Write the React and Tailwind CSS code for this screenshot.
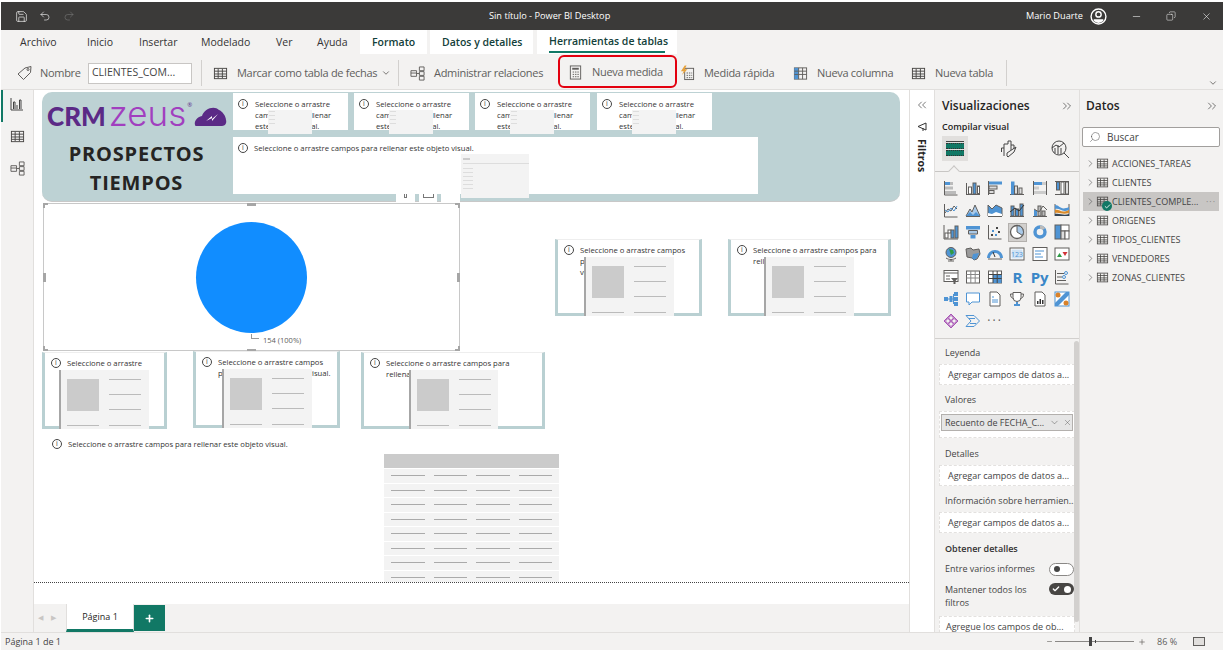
import React from 'react';
import { ChevronDown, ChevronRight, ChevronsLeft, ChevronsRight, Check, Minus, Plus, Search, Undo2, Redo2, X, Save, Copy } from 'lucide-react';

const G = '#605e5c';
const B = '#4f94d4';
const LB = '#a9c9e8';

const Ic = ({ children, size = 16, vb = 16, className = '' }) => (
  <svg width={size} height={size} viewBox={`0 0 ${vb} ${vb}`} fill="none" strokeWidth="1" className={className}>
    {children}
  </svg>
);

const P = ({ d, c = G, f = 'none' }) => <path d={d} stroke={c} fill={f} />;
const R = ({ x, y, w, h, f = B, s = 'none' }) => <rect x={x} y={y} width={w} height={h} fill={f} stroke={s} />;

// icons of the visual gallery, row by row
const vizIcons = [
  <><P d="M1.5 1v14h13" /><R x={2} y={2} w={5} h={3} /><R x={7} y={2} w={3} h={3} f="#bbb" /><R x={2} y={6.5} w={8} h={3} f="#bbb" /><R x={2} y={11} w={11} h={3} f="#bbb" /></>,
  <><P d="M1 14.5h14M1.5 3v12" /><R x={3.5} y={7} w={3} h={7} s={G} f="#fff" /><R x={8} y={3} w={3} h={11} s={G} /><R x={12.5} y={6} w={2} h={8} s={G} f="#fff" /></>,
  <><P d="M1.5 1v14" /><R x={2} y={1.5} w={13} h={3} /><R x={2} y={6} w={8} h={3} f="#ddd" s={G} /><R x={2} y={10.5} w={5} h={3} f="#ddd" s={G} /></>,
  <><P d="M1 14.5h14" /><R x={2} y={1.5} w={3.5} h={13} /><R x={5.5} y={6} w={3} h={8} f="#ddd" s={G} /><R x={10} y={8} w={3} h={6} f="#ddd" s={G} /></>,
  <><P d="M1.5 1v14M14.5 1v14" /><R x={2} y={2} w={8} h={3} /><R x={10} y={2} w={4} h={3} f="#ccc" /><R x={2} y={6.5} w={5} h={3} f="#ccc" /><R x={2} y={11} w={12} h={3} f="#ccc" /></>,
  <><P d="M1 14.5h14M1 1.5h14" /><R x={2.5} y={2} w={3} h={8} s={G} /><R x={7} y={2} w={3} h={12} s={G} f="#fff" /><R x={11.5} y={2} w={3} h={12} s={G} f="#ddd" /></>,
  <><P d="M1.5 2v13h13" /><P d="M2 11l3-4 3 2 3-5 3 3" /><P d="M2 8l3 2 3-4 3 3 3-5" c={B} /></>,
  <><P d="M1 14.5h14" /><path d="M1 14l4-7 2 3 3-7 5 11z" fill={LB} stroke={G} /><path d="M1 14l4-4 3 3 3-3 4 4z" fill={B} /></>,
  <><P d="M1 14.5h14" /><path d="M1 3l4 4 4-4 6 3v8H1z" fill={B} stroke={G} /><path d="M1 11l4 1 4-2 6 2v2H1z" fill="#fff" /></>,
  <><P d="M1 14.5h14" /><R x={2} y={4} w={3} h={10} s={G} /><R x={6.5} y={7} w={3} h={7} s={G} /><R x={11} y={2} w={3} h={12} s={G} /><P d="M1 10l5-4 4 3 5-6" c="#333" /></>,
  <><P d="M1 14.5h14" /><R x={2} y={8} w={3} h={6} /><R x={6} y={4} w={3} h={10} f="#bbb" s={G} /><R x={10} y={9} w={3} h={5} f="#bbb" s={G} /><P d="M2 7l5 3 4-6 4 4" /></>,
  <><P d="M1 2v12M15 2v12" /><path d="M1 3c5 0 5 6 14 2v3c-8 3-8-2-14-1z" fill={B} /><path d="M1 8c5-1 6 4 14 0v3c-7 2-9-1-14 0z" fill="#d98a2b" /><path d="M1 12c5-1 8 2 14 0v2H1z" fill="#345" /></>,
  <><P d="M1 1v14h14" /><R x={2} y={9} w={3} h={5} f="#fff" s={G} /><R x={5} y={6} w={3} h={3} s={G} f="#fff" /><R x={8} y={6} w={3} h={8} s={G} /><R x={12} y={2} w={3} h={12} s={G} /></>,
  <><path d="M1 2h14v3.5H1z" fill={B} /><path d="M3.5 6.5h9V10h-9z" fill={LB} stroke={G} /><path d="M5.5 11h5v3.5h-5z" fill={B} /></>,
  <><P d="M1.5 1v14h13" /><R x={9} y={3} w={2} h={2} f="#444" /><R x={5} y={6} w={2} h={2} /><R x={11} y={7} w={2} h={2} f="#444" /><R x={4} y={10} w={2} h={2} f="#444" /><R x={8} y={10} w={2} h={2} /></>,
  <><circle cx="8" cy="8" r="6.5" fill="#fff" stroke={G} strokeWidth="1.3" /><path d="M8 8V1.5A6.5 6.5 0 0 1 13.5 11.5z" fill={LB} stroke={G} /></>,
  <><circle cx="8" cy="8" r="5" stroke={B} strokeWidth="3.4" /><path d="M8 3a5 5 0 0 1 4 2" stroke="#bbb" strokeWidth="3.4" /></>,
  <><R x={1} y={1} w={6} h={14} s={G} /><R x={7} y={1} w={8} h={6} f="#fff" s={G} /><R x={7} y={7} w={4} h={8} f="#ddd" s={G} /><R x={11} y={7} w={4} h={8} f="#fff" s={G} /></>,
  <><circle cx="8" cy="6.5" r="5" fill={B} stroke={G} /><path d="M6 3l4 1 1 3-3 2z" fill="#2e9b45" /><P d="M3 12c3 2 7 2 10 0M8 13v2M5 15h6" /></>,
  <><path d="M1 3l5-1 2 2 6-1 1 5-3 5-3 1-2-2-5-1z" fill="#9a9a9a" stroke={G} /><path d="M8 8l6-1-2 5-3 2-2-2z" fill={B} /></>,
  <><path d="M1.5 12a6.5 6.5 0 0 1 13 0" stroke={B} strokeWidth="3" /><P d="M8 11L6 6" c="#333" /><P d="M1 13h14" /></>,
  <><R x={1} y={2} w={14} h={12} f="#fff" s={G} /><R x={2.5} y={3.5} w={11} h={9} f="#cfe2f3" /><text x="8" y="11" textAnchor="middle" fontSize="7" fill={B} fontFamily="'Open Sans',sans-serif">123</text></>,
  <><R x={1} y={1.5} w={14} h={13} f="#fff" s={G} /><P d="M3 5h9M3 8h6M3 11h8" c={B} /></>,
  <><R x={1} y={2} w={14} h={12} f="#fff" s={G} /><path d="M3 11l2.500-4 2.500 4z" fill="#2e9b45" /><path d="M8.500 6h5l-2.500 4z" fill="#d13438" /></>,
  <><R x={1} y={1.5} w={14} h={11} f="#fff" s={G} /><P d="M1 4h14M3 7h4M3 10h4" /><path d="M8 9h7l-2.500 3v3h-2v-3z" fill={G} /></>,
  <><R x={1.5} y={2} w={13} h={12} f="#fff" s={G} /><P d="M1.500 5.500h13M1.500 9h13M5.800 2v12M10.200 2v12" c="#888" /></>,
  <><R x={1.5} y={2} w={13} h={12} f="#fff" s={G} /><R x={6} y={6} w={8.500} h={8} /><P d="M1.500 5.500h13M1.500 9.500h13M6 2v12M10.200 2v12" c="#444" /></>,
  <span className="block text-[15px] leading-4 font-bold text-[#3a87c8] text-center">R</span>,
  <span className="block text-[15px] leading-4 font-bold text-[#3a87c8] text-center">Py</span>,
  <><P d="M1.500 1v14h13" /><P d="M3 4.500h7M3 8h5M3 11.500h9" /><circle cx="12" cy="4" r="1.500" stroke={B} /><circle cx="10" cy="8" r="1.500" stroke={B} /></>,
  <><R x={1} y={6} w={4} h={4} /><R x={6.500} y={5} w={3} h={6} /><R x={11} y={1} w={4} h={4} /><R x={11} y={6} w={4} h={4} /><R x={11} y={11} w={4} h={4} /><P d="M5 8h2M9 8h2M10.500 3v10" c={B} /></>,
  <><path d="M1.500 2h13v9H7l-3 3v-3H1.500z" stroke={B} fill="#fff" /></>,
  <><path d="M3 1h7l3 3v11H3z" stroke={G} fill="#fff" /><P d="M5 6h2M5 9h6M5 11h6" c={B} /></>,
  <><path d="M4 1.500h8v5a4 4 0 0 1-8 0z" stroke={G} fill="#fff" /><P d="M4 3H1.500c0 3 1 4 3 4.500M12 3h2.500c0 3-1 4-3 4.500" /><path d="M7 11h2v2h2v2H5v-2h2z" fill={B} /></>,
  <><path d="M3 1h7l3 3v11H3z" stroke={G} fill="#fff" /><R x={5} y={10} w={1.500} h={3} f="#333" /><R x={7.500} y={8} w={1.500} h={5} f="#333" /><R x={10} y={9} w={1.500} h={4} f="#333" /></>,
  <><R x={1} y={1} w={14} h={14} f="#fff" s={B} /><path d="M1 12L12 1h3v3L4 15H1z" fill={B} /><circle cx="4" cy="4" r="2.500" fill="#d9822b" /><circle cx="12" cy="12" r="2.500" fill="#d9822b" /></>,
  <><path d="M8 1l7 7-7 7-7-7z" stroke="#a855b5" /><circle cx="5" cy="8" r="2.300" stroke="#a855b5" /><circle cx="11" cy="8" r="2.300" stroke="#a855b5" /><circle cx="8" cy="5" r="2.300" stroke="#a855b5" /><circle cx="8" cy="11" r="2.300" stroke="#a855b5" /></>,
  <><path d="M1 2.500h8l5.500 5.500-5.500 5.500H1L6 8z" stroke={B} /><path d="M4 5.500l6 0M5 10.500h6" stroke={B} /></>,
  <span className="block text-[12px] leading-[12px] tracking-[2px] text-[#605e5c] text-center">···</span>,
];

const TableIcon = ({ className = '' }) => (
  <Ic size={15} className={className}>
    <rect x="1.500" y="2.500" width="13" height="11" stroke="#484644" />
    <path d="M1.500 5.500h13M1.500 8.500h13M1.500 11h13M5.500 3v10M10 3v10" stroke="#484644" />
  </Ic>
);

const RelIcon = () => (
  <Ic size={15}>
    <path d="M1 5h6v6H1zM10 1h5v4h-5zM10 6h5v4h-5zM10 11h5v4h-5z" stroke={G} />
    <path d="M7 8h3M1 7.500h6" stroke={G} />
  </Ic>
);

const CalcIcon = () => (
  <Ic size={15}>
    <rect x="2.500" y="1" width="11" height="14" stroke={G} />
    <path d="M4.500 3h7v2h-7z" fill={G} />
    <path d="M5 7.500h1.500M7.500 7.500h1.500M10 7.500h1.500M5 10h1.500M7.500 10h1.500M10 10h1.500M5 12.500h1.500M7.500 12.500h1.500M10 12.500h1.500" stroke={G} />
  </Ic>
);

const QuickIcon = () => (
  <Ic size={16}>
    <rect x="5" y="3" width="9.500" height="12" stroke={G} />
    <path d="M7 8h1.500M9.500 8H11M12 8h1M7 10.500h1.500M9.500 10.500H11M12 10.500h1M7 13h1.500M9.500 13H11M12 13h1" stroke={G} />
    <path d="M5 0L1 6h3l-2 4 6-6H5l2-4z" fill="#e8a33d" />
  </Ic>
);

const ColIcon = () => (
  <Ic size={15}>
    <rect x="1.500" y="2" width="13" height="12" stroke={G} />
    <rect x="1.500" y="2" width="4.500" height="12" fill={B} />
    <path d="M1.500 5.500h13M1.500 9h13M6 2v12M10.200 2v12" stroke={G} />
  </Ic>
);

const TagIcon = () => (
  <Ic size={16}>
    <path d="M1 9l7-6 6-1.500-.5 6-7 7z" stroke={G} />
    <circle cx="11" cy="4.500" r="1" stroke={G} />
  </Ic>
);

const ToolItem = ({ icon, label, textCls, className = '' }) => (
  <div className={`flex items-center ${className}`}>
    <span className="w-[15px] flex justify-center shrink-0">{icon}</span>
    <span className={`ml-[9px] whitespace-nowrap ${textCls}`}>{label}</span>
  </div>
);

const Info = () => (
  <span className="w-[10px] h-[10px] rounded-full border border-[#444] text-[7px] leading-[8px] text-center text-[#444] shrink-0 block">i</span>
);

const MSG = 'Seleccione o arrastre campos para rellenar este objeto visual.';

// white placeholder in the banner, with a little thumb on top of the text
const MiniCard = ({ className }) => (
  <div className={`absolute top-[1px] w-[115px] h-[37px] bg-white flex gap-[7px] pl-[5px] pt-[6px] text-[7.700px] leading-[11px] text-[#333] ${className}`}>
    <Info />
    <span className="w-[90px]">{MSG}</span>
    <div className="absolute left-[35px] top-[17px] w-[44px] h-[24px] bg-[#f3f3f3] flex flex-col gap-[3px] pt-[1px] pl-[1px]">
      <div className="w-[6px] h-px bg-[#ddd]" />
      <div className="w-[6px] h-px bg-[#ddd]" />
      <div className="w-[6px] h-px bg-[#ddd]" />
      <div className="w-[6px] h-px bg-[#ddd]" />
    </div>
  </div>
);

const Thumb = ({ className }) => (
  <div className={`absolute bg-[#f3f3f3] border-l-2 border-[#a6a6a6] overflow-hidden ${className}`}>
    <div className="grid grid-cols-[32px_32px] gap-x-[10px] gap-y-[13.500px] pl-[6px] pt-[9px]">
      <div className="row-span-3 h-[32px] bg-[#cbcbcb]" />
      <div className="h-px bg-[#bbb]" />
      <div className="h-px bg-[#bbb]" />
      <div className="h-px bg-[#bbb]" />
      <div className="h-px bg-[#bbb]" />
      <div className="h-px bg-[#bbb]" />
    </div>
  </div>
);

// teal framed empty visual
const FrameCard = ({ className, text, textW }) => (
  <div className={`absolute border-x-[3px] border-b-[3px] border-[#b9d0d2] border-t border-t-[#eeeeee] bg-white flex gap-[6px] pl-[6px] pt-[5px] text-[7.700px] leading-[11px] text-[#333] overflow-hidden ${className}`}>
    <Info />
    <span className={textW}>{text}</span>
  </div>
);

const Handle = ({ className }) => <div className={`absolute bg-[#a6a6a6] ${className}`} />;

const Well = ({ children, className = '' }) => (
  <div className={`mx-[4px] border border-dashed border-[#e3e1df] bg-white text-[#444] ${className}`}>{children}</div>
);

const Add = ({ className = '' }) => (
  <Well className={`h-[21px] pl-[8px] flex items-center ${className}`}>Agregar campos de datos a...</Well>
);

const tableNames = ['ACCIONES_TAREAS', 'CLIENTES', 'CLIENTES_COMPLE...', 'ORIGENES', 'TIPOS_CLIENTES', 'VENDEDORES', 'ZONAS_CLIENTES'];

export default function App() {
  return (
    <div className="w-[1223px] h-[650px] overflow-hidden bg-white pt-[2px] pl-[1px] flex flex-col font-['Open_Sans',sans-serif] text-[#444]">
      {/* Title bar */}
      <div className="h-[28px] shrink-0 bg-[#3b3a39] text-white flex items-center relative text-[9.200px]">
        <Save size={13} strokeWidth={1.2} className="ml-[14px]" />
        <Undo2 size={12} strokeWidth={1.2} className="ml-[11px]" />
        <Redo2 size={12} strokeWidth={1.2} className="ml-[12px] text-[#777]" />
        <span className="ml-[414px] w-[120px] whitespace-nowrap">Sin título - Power BI Desktop</span>
        <span className="ml-[417px] w-[60px] whitespace-nowrap">Mario Duarte</span>
        <svg width="17" height="17" viewBox="0 0 16 16" className="ml-[4px]">
          <circle cx="8" cy="8" r="7" fill="none" stroke="#fff" strokeWidth="1.300" />
          <circle cx="8" cy="6" r="2.500" fill="none" stroke="#fff" strokeWidth="1.300" />
          <path d="M3.500 10.500h9v1.500a6 6 0 0 1-9 0z" fill="#fff" />
        </svg>
        <Minus size={11} strokeWidth={1.2} className="ml-[24px]" />
        <Copy size={10} strokeWidth={1.2} className="ml-[24px] -scale-x-100" />
        <X size={11} strokeWidth={1.2} className="ml-[25px]" />
      </div>

      {/* Ribbon tabs */}
      <div className="h-[24px] shrink-0 bg-[#f3f2f1] flex items-end text-[10.500px] whitespace-nowrap">
        <div className="flex items-center h-[24px] pt-[2px] text-[#333]">
          <span className="ml-[19px] w-[67px]">Archivo</span>
          <span className="w-[52px]">Inicio</span>
          <span className="w-[62px]">Insertar</span>
          <span className="w-[75px]">Modelado</span>
          <span className="w-[41px]">Ver</span>
          <span className="w-[43px]">Ayuda</span>
        </div>
        <div className="h-[24px] w-[67px] bg-white pl-[12px] pt-[2px] flex items-center font-semibold text-[#12403a]">Formato</div>
        <div className="h-[24px] w-[103px] ml-[3px] bg-white pl-[12px] pt-[2px] flex items-center font-semibold text-[#12403a]">Datos y detalles</div>
        <div className="h-[24px] w-[140px] ml-[4px] bg-white px-[12px] font-semibold text-[#12403a]">
          <div className="h-[23px] pt-[2px] border-b-2 border-[#117865] flex items-center">Herramientas de tablas</div>
        </div>
      </div>

      {/* Ribbon commands */}
      <div className="h-[36px] shrink-0 bg-[#f3f2f1] pt-[3px] flex items-center text-[11px] tracking-[-0.3px] text-[#605e5c] relative border-b border-[#e1dfdd]">
        <div className="ml-[16px] flex items-center w-[71px]">
          <TagIcon />
          <span className="ml-[7px]">Nombre</span>
        </div>
        <div className="w-[104px] h-[21px] bg-white border border-[#c8c6c4] pl-[3px] flex items-center text-[10.500px] tracking-normal text-[#444]">CLIENTES_COM...</div>
        <div className="ml-[9px] w-px h-[26px] bg-[#d2d0ce]" />
        <ToolItem className="ml-[11px]" icon={<TableIcon />} label="Marcar como tabla de fechas" textCls="w-[142px]" />
        <ChevronDown size={10} className="ml-[2px]" />
        <div className="ml-[7px] w-px h-[26px] bg-[#d2d0ce]" />
        <ToolItem className="ml-[11px]" icon={<RelIcon />} label="Administrar relaciones" textCls="w-[109px]" />
        <div className="ml-[15px] -mt-[3px] w-[119px] h-[33px] border-2 border-[#e3000f] rounded-[6px] pl-[8px] pt-[2px] flex items-center">
          <ToolItem icon={<CalcIcon />} label="Nueva medida" textCls="w-[71px]" />
        </div>
        <ToolItem className="ml-[3px]" icon={<QuickIcon />} label="Medida rápida" textCls="w-[72px]" />
        <ToolItem className="ml-[17px]" icon={<ColIcon />} label="Nueva columna" textCls="w-[76px]" />
        <ToolItem className="ml-[18px]" icon={<TableIcon />} label="Nueva tabla" textCls="w-[58px]" />
        <div className="ml-[13px] w-px h-[26px] bg-[#d2d0ce]" />
        <ChevronDown size={10} className="absolute right-[5px] bottom-[1px]" />
      </div>

      <div className="flex-1 flex min-h-0">
        {/* View switcher */}
        <div className="w-[33px] shrink-0 bg-[#f3f2f1] border-r border-[#e1dfdd] flex flex-col">
          <div className="h-[32px] border-l-2 border-[#117865] flex justify-center pt-[7px] pr-[2px]">
            <svg width="14" height="14" viewBox="0 0 14 14" fill="none" stroke="#444">
              <path d="M1 1v12h12M3.500 12V5h1.500v7M7 12V8M9.500 12V3h1.500v9" />
            </svg>
          </div>
          <div className="mt-[7px] flex justify-center"><TableIcon /></div>
          <div className="mt-[17px] flex justify-center"><RelIcon /></div>
        </div>

        {/* Report canvas: visuals sit at free places on the page */}
        <div className="w-[875px] shrink-0 flex flex-col">
          <div className="h-[514px] relative bg-white overflow-hidden">
            <div className="absolute left-[8px] top-[2px] w-[858px] h-[110px] bg-[#bdd2d4] rounded-[10px] border-b border-[#c8c8c8]">
              <div className="absolute left-[5px] top-[4px] flex items-baseline whitespace-nowrap leading-none">
                <span className="font-['Lato',sans-serif] font-black text-[26px] text-[#5b2a86]">CRM</span>
                <span className="ml-[3px] font-['Inter',sans-serif] font-light text-[35px] text-[#a13fbf]">zeus</span>
                <span className="text-[6px] text-[#5b2a86] self-start mt-[6px] ml-[1px]">®</span>
                <svg width="33" height="24" viewBox="0 0 33 24" className="ml-[2px] translate-y-[1px]">
                  <path d="M1 22c-1-4 2-8 7-9 2-7 12-11 17-6 3 1 7 6 7 10 1 3-1 6-4 6H4c-2 0-3 0-3-1z" fill="#5b2a86" />
                  <path d="M12 18l6-5 0 3 6-5-6 7 0-3z" fill="#fff" />
                </svg>
              </div>
              <div className="absolute left-0 top-[47px] w-[189px] text-center text-[20px] leading-[29px] font-bold tracking-[0.8px] text-[#252423]">
                <div>PROSPECTOS</div>
                <div>TIEMPOS</div>
              </div>
              <MiniCard className="left-[191px]" />
              <MiniCard className="left-[312px]" />
              <MiniCard className="left-[433px]" />
              <MiniCard className="left-[555px]" />
              <div className="absolute left-[191px] top-[45px] w-[525px] h-[57px] bg-white pl-[5px] pt-[6px] flex gap-[6px] text-[7.700px] leading-[11px] text-[#333] whitespace-nowrap">
                <Info />
                <span>{MSG}</span>
              </div>
              <div className="absolute left-[419px] top-[62px] w-[68px] h-[44px] bg-[#f3f3f3] pt-[4px] pl-[2px] flex flex-col gap-[3px]">
                <div className="w-[7px] h-[2px] bg-[#ccc]" />
                <div className="h-px bg-[#ddd] mb-[1px]" />
                <div className="w-[10px] h-px bg-[#ddd]" />
                <div className="w-[10px] h-px bg-[#ddd]" />
                <div className="w-[10px] h-px bg-[#ddd]" />
                <div className="w-[10px] h-px bg-[#ddd]" />
                <div className="w-[10px] h-px bg-[#ddd]" />
                <div className="w-[10px] h-px bg-[#ddd]" />
              </div>
              {/* small header buttons of the selected visual */}
              <div className="absolute left-[354px] top-[102px] flex h-[8px] gap-[4px]">
                <div className="w-[19px] bg-white flex justify-center">
                  <div className="w-[3px] h-[4px] border-x border-b border-[#777]" />
                </div>
                <div className="w-[18px] bg-white flex justify-center">
                  <div className="w-[11px] h-[4px] border-x border-b border-[#777]" />
                </div>
                <div className="w-[19px] bg-white" />
              </div>
            </div>

            {/* Selected pie chart */}
            <div className="absolute left-[9px] top-[113px] w-[417px] h-[148px] bg-white border border-[#c8c8c8]">
              <div className="absolute left-[152px] top-[18px] w-[111px] h-[111px] rounded-full bg-[#118dff]" />
              <div className="absolute left-[207px] top-[130px] w-[8px] h-[5px] border-l border-b border-[#999]" />
              <span className="absolute left-[219px] top-[131px] text-[7.500px] leading-[11px] text-[#605e5c] whitespace-nowrap">154 (100%)</span>
              <Handle className="-left-px -top-px w-[5px] h-[2px]" />
              <Handle className="-left-px -top-px w-[2px] h-[5px]" />
              <Handle className="-right-px -top-px w-[5px] h-[2px]" />
              <Handle className="-right-px -top-px w-[2px] h-[5px]" />
              <Handle className="-left-px -bottom-px w-[5px] h-[2px]" />
              <Handle className="-left-px -bottom-px w-[2px] h-[5px]" />
              <Handle className="-right-px -bottom-px w-[5px] h-[2px]" />
              <Handle className="-right-px -bottom-px w-[2px] h-[5px]" />
              <Handle className="left-[203px] -top-px w-[9px] h-[3px]" />
              <Handle className="left-[203px] -bottom-px w-[9px] h-[2px]" />
              <Handle className="-left-px top-[69px] w-[3px] h-[9px]" />
              <Handle className="-right-px top-[69px] w-[3px] h-[9px]" />
            </div>

            <FrameCard className="left-[8px] top-[262px] w-[125px] h-[77px]" text="Seleccione o arrastre" textW="w-[100px]" />
            <Thumb className="left-[25px] top-[280px] w-[90px] h-[59px]" />
            <FrameCard className="left-[159px] top-[261px] w-[147px] h-[77px]" text={MSG} textW="w-[122px]" />
            <Thumb className="left-[188px] top-[279px] w-[90px] h-[59px]" />
            <FrameCard className="left-[327px] top-[262px] w-[184px] h-[77px]" text={MSG} textW="w-[140px]" />
            <Thumb className="left-[375px] top-[280px] w-[89px] h-[59px]" />
            <FrameCard className="left-[521px] top-[149px] w-[147px] h-[77px]" text={MSG} textW="w-[112px]" />
            <Thumb className="left-[550px] top-[167px] w-[90px] h-[59px]" />
            <FrameCard className="left-[694px] top-[149px] w-[163px] h-[77px]" text={MSG} textW="w-[140px]" />
            <Thumb className="left-[730px] top-[167px] w-[90px] h-[59px]" />

            <div className="absolute left-[18px] top-[349px] flex gap-[6px] text-[7.700px] leading-[11px] text-[#333] whitespace-nowrap">
              <Info />
              <span>{MSG}</span>
            </div>

            {/* Table placeholder */}
            <div className="absolute left-[350px] top-[364px] w-[175px] h-[128px] overflow-hidden">
              <div className="h-[14px] bg-[#cbcbcb]" />
              {[0, 1, 2, 3, 4, 5, 6, 7].map((r) => (
                <div key={r} className="h-[13.500px] mt-px bg-[#f3f3f3] grid grid-cols-4 gap-x-[9px] items-center px-[7px]">
                  <div className="h-px bg-[#aaa]" />
                  <div className="h-px bg-[#aaa]" />
                  <div className="h-px bg-[#aaa]" />
                  <div className="h-px bg-[#aaa]" />
                </div>
              ))}
            </div>

            <div className="absolute left-0 right-0 top-[492px] border-t border-dotted border-[#444]" />
          </div>

          {/* Page tabs */}
          <div className="h-[28px] bg-[#f3f2f1] flex items-stretch text-[9px]">
            <div className="w-[32px] flex items-center gap-[8px] pl-[4px] text-[#c8c6c4] text-[7px]">
              <span>◀</span>
              <span>▶</span>
            </div>
            <div className="w-[68px] bg-white border-x border-[#e1dfdd] border-b-[3px] border-b-[#117865] flex items-center justify-center text-[#252423]">Página 1</div>
            <div className="w-[31px] my-[1px] bg-[#117865] flex items-center justify-center">
              <Plus size={11} strokeWidth={3.500} className="text-white" />
            </div>
          </div>
        </div>

        {/* Filters collapsed */}
        <div className="w-[26px] shrink-0 bg-white border-x border-[#e1dfdd] flex flex-col items-center">
          <ChevronsLeft size={14} strokeWidth={1.2} className="mt-[8px]" />
          <svg width="10" height="10" viewBox="0 0 10 10" fill="none" stroke="#333" className="mt-[10px]">
            <path d="M9 1L1 4.500 9 8zM6 6v3" />
          </svg>
          <span className="mt-[7px] [writing-mode:vertical-rl] text-[10.500px] leading-[12px] font-bold text-[#252423]">Filtros</span>
        </div>

        {/* Visualizations pane */}
        <div className="w-[145px] shrink-0 bg-[#f3f2f1] relative overflow-hidden text-[9px] border-r border-[#e1dfdd]">
          <div className="h-[32px] flex items-center pl-[7px] pr-[5px] justify-between">
            <span className="text-[12px] font-semibold text-[#252423]">Visualizaciones</span>
            <ChevronsRight size={14} strokeWidth={1.2} />
          </div>
          <div className="h-[10px] pl-[7px] flex items-center font-semibold text-[#252423]">Compilar visual</div>
          <div className="mt-[4px] h-[25px] flex items-center">
            <div className="ml-[7px] w-[26px] h-[25px] bg-[#e1dfdd] flex flex-col items-center justify-center gap-[1px]">
              <div className="w-[18px] h-px bg-[#444]" />
              <div className="w-[18px] h-[6px] bg-[#117865] border-y border-dotted border-[#333]" />
              <div className="w-[18px] h-[6px] bg-[#117865] border-y border-dotted border-[#333]" />
            </div>
            <svg width="18" height="18" viewBox="0 0 18 18" fill="none" stroke="#444" className="ml-[32px]">
              <path d="M4 16V8H1.500v4M4 8V4h4v-3h3v9M11 5h3v4M7 16v-3l9-6-2 5-6 5z" />
            </svg>
            <svg width="20" height="20" viewBox="0 0 20 20" fill="none" stroke="#444" className="ml-[32px]">
              <circle cx="9" cy="9" r="7" />
              <path d="M14 14l5 5M5 14V9M8 15V6M11 15V9M2 9l4-3 3 2 5-4" />
            </svg>
          </div>
          <div className="relative mt-[10px] h-px bg-[#c8c6c4]">
            <div className="absolute left-[15px] -top-[4px] w-[8px] h-[8px] rotate-45 bg-[#f3f2f1] border-l border-t border-[#c8c6c4]" />
          </div>
          <div className="mt-[6px] ml-[6px] grid grid-cols-[repeat(6,22.300px)] auto-rows-[22.300px]">
            {vizIcons.map((icon, i) => (
              <div key={i} className={`w-[19px] h-[19px] flex items-center justify-center ${i === 15 ? 'bg-[#d2d0ce] border border-[#b3b0ad]' : ''}`}>
                {React.isValidElement(icon) && icon.type === 'span' ? <div className="w-[20px]">{icon}</div> : <Ic>{icon}</Ic>}
              </div>
            ))}
          </div>
          <div className="mt-[4px] h-px bg-[#d2d0ce]" />
          <div className="mt-[7px] pl-[10px] h-[14px] flex items-center">Leyenda</div>
          <Add className="mt-[4px]" />
          <div className="mt-[8px] pl-[10px] h-[14px] flex items-center">Valores</div>
          <Well className="mt-[4px] h-[27px] pt-[2px] px-[1px]">
            <div className="h-[17px] bg-[#e6e6e6] border border-[#b3b0ad] pl-[3px] flex items-center whitespace-nowrap">
              <span className="w-[104px]">Recuento de FECHA_C...</span>
              <ChevronDown size={11} strokeWidth={1} />
              <X size={9} strokeWidth={1} className="ml-[3px]" />
            </div>
          </Well>
          <div className="mt-[9px] pl-[10px] h-[14px] flex items-center">Detalles</div>
          <Add className="mt-[4px]" />
          <div className="mt-[8px] pl-[10px] h-[14px] flex items-center whitespace-nowrap">Información sobre herramien...</div>
          <Add className="mt-[4px]" />
          <div className="mt-[9px] pl-[10px] h-[14px] flex items-center font-semibold text-[#333]">Obtener detalles</div>
          <div className="mt-[6px] pl-[10px] h-[14px] pr-[5px] flex items-center justify-between">
            <span>Entre varios informes</span>
            <div className="w-[25px] h-[13px] rounded-full bg-white border border-[#8a8886] pl-[4px] flex items-center">
              <div className="w-[6px] h-[6px] rounded-full bg-[#444]" />
            </div>
          </div>
          <div className="mt-[7px] pl-[10px] pr-[5px] flex justify-between items-start">
            <span className="w-[88px] leading-[13px]">Mantener todos los filtros</span>
            <div className="w-[25px] h-[12px] rounded-full bg-[#484644] flex items-center justify-between px-[3px]">
              <Check size={8} strokeWidth={4} className="text-white" />
              <div className="w-[7px] h-[7px] rounded-full bg-white" />
            </div>
          </div>
          <Well className="mt-[7px] h-[21px] pl-[6px] flex items-center">Agregue los campos de ob...</Well>
          <div className="absolute left-[139px] top-[251px] w-[5px] h-[281px] rounded-full bg-[#d2d0ce]" />
        </div>

        {/* Data pane */}
        <div className="flex-1 bg-[#f3f2f1] text-[9px]">
          <div className="h-[32px] flex items-center pl-[6px] pr-[4px] justify-between">
            <span className="text-[12px] font-semibold text-[#252423]">Datos</span>
            <ChevronsRight size={14} strokeWidth={1.2} />
          </div>
          <div className="ml-[2px] mt-[5px] w-[138px] h-[20px] bg-white border border-[#a19f9d] rounded-[2px] flex items-center pl-[6px] text-[10px]">
            <Search size={12} strokeWidth={1} className="-scale-x-100" />
            <span className="ml-[6px]">Buscar</span>
          </div>
          <div className="mt-[7px] ml-[3px] w-[136px]">
            {tableNames.map((name, i) => (
              <div key={name} className={`h-[19px] flex items-center relative whitespace-nowrap ${i === 2 ? 'bg-[#c8c6c4]' : ''}`}>
                <ChevronRight size={11} strokeWidth={1.2} className="ml-[2px]" />
                <TableIcon className="-ml-[1px] scale-[0.85]" />
                <span className="ml-[2px]">{name}</span>
                {i === 2 && (
                  <>
                    <span className="absolute left-[19px] top-[9px] w-[10px] h-[10px] rounded-full bg-[#117865] flex items-center justify-center">
                      <Check size={7} strokeWidth={3} className="text-white" />
                    </span>
                    <span className="absolute right-[3px] text-[#8a8886] tracking-[1px]">···</span>
                  </>
                )}
              </div>
            ))}
          </div>
        </div>
      </div>

      {/* Status bar */}
      <div className="h-[18px] shrink-0 bg-[#f3f2f1] border-t border-[#e1dfdd] flex items-center text-[9px] relative">
        <span className="ml-[4px]">Página 1 de 1</span>
        <div className="ml-auto flex items-center text-[#605e5c]">
          <Minus size={7} strokeWidth={2} />
          <div className="ml-[2px] w-[79px] h-px bg-[#8a8886] relative">
            <div className="absolute left-[34px] -top-[4px] w-[3px] h-[9px] bg-[#444]" />
            <div className="absolute left-[40px] -top-[1px] w-px h-[3px] bg-[#444]" />
          </div>
          <Plus size={8} strokeWidth={2} className="ml-[4px]" />
          <span className="ml-[11px] w-[30px] whitespace-nowrap">86 %</span>
          <div className="mr-[18px] ml-[6px] w-[12px] h-[9px] border border-[#605e5c] bg-[#e1dfdd]" />
        </div>
      </div>
    </div>
  );
}
